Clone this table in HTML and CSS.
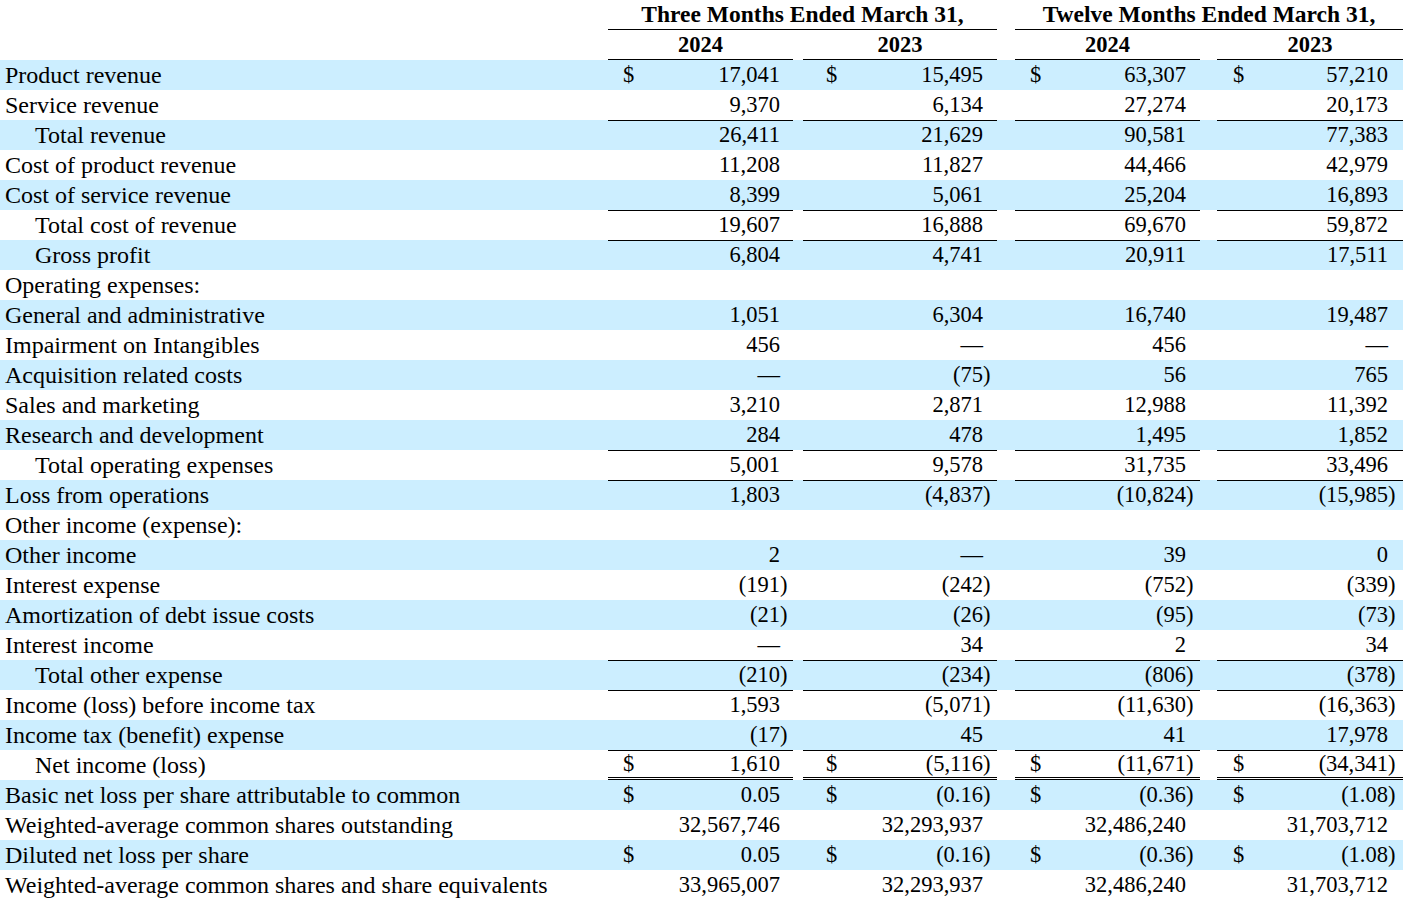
FILE: index.html
```html
<!DOCTYPE html>
<html lang="en">
<head>
<meta charset="utf-8">
<title>Statement of Operations</title>
<link rel="stylesheet" href="styles.css">
</head>
<body>
<div class="sheet">
  <div class="row head">
    <div class="lbl"></div>
    <div class="hd span-a">Three Months Ended March 31,</div>
    <div class="gap"></div>
    <div class="hd span-b">Twelve Months Ended March 31,</div>
  </div>
  <div class="row head">
    <div class="lbl"></div>
    <div class="yr">2024</div><div class="gap"></div>
    <div class="yr">2023</div><div class="gap"></div>
    <div class="yr">2024</div><div class="gap"></div>
    <div class="yr">2023</div>
  </div>

  <div class="row shade">
    <div class="lbl">Product revenue</div>
    <div class="v c1"><span class="d">$</span><span class="n">17,041</span><span class="p"></span></div><div class="gap"></div>
    <div class="v c2"><span class="d">$</span><span class="n">15,495</span><span class="p"></span></div><div class="gap"></div>
    <div class="v c3"><span class="d">$</span><span class="n">63,307</span><span class="p"></span></div><div class="gap"></div>
    <div class="v c4"><span class="d">$</span><span class="n">57,210</span><span class="p"></span></div>
  </div>
  <div class="row">
    <div class="lbl">Service revenue</div>
    <div class="v c1"><span class="d"></span><span class="n">9,370</span><span class="p"></span></div><div class="gap"></div>
    <div class="v c2"><span class="d"></span><span class="n">6,134</span><span class="p"></span></div><div class="gap"></div>
    <div class="v c3"><span class="d"></span><span class="n">27,274</span><span class="p"></span></div><div class="gap"></div>
    <div class="v c4"><span class="d"></span><span class="n">20,173</span><span class="p"></span></div>
  </div>
  <div class="row shade">
    <div class="lbl ind">Total revenue</div>
    <div class="v c1 t"><span class="d"></span><span class="n">26,411</span><span class="p"></span></div><div class="gap"></div>
    <div class="v c2 t"><span class="d"></span><span class="n">21,629</span><span class="p"></span></div><div class="gap"></div>
    <div class="v c3 t"><span class="d"></span><span class="n">90,581</span><span class="p"></span></div><div class="gap"></div>
    <div class="v c4 t"><span class="d"></span><span class="n">77,383</span><span class="p"></span></div>
  </div>
  <div class="row">
    <div class="lbl">Cost of product revenue</div>
    <div class="v c1"><span class="d"></span><span class="n">11,208</span><span class="p"></span></div><div class="gap"></div>
    <div class="v c2"><span class="d"></span><span class="n">11,827</span><span class="p"></span></div><div class="gap"></div>
    <div class="v c3"><span class="d"></span><span class="n">44,466</span><span class="p"></span></div><div class="gap"></div>
    <div class="v c4"><span class="d"></span><span class="n">42,979</span><span class="p"></span></div>
  </div>
  <div class="row shade">
    <div class="lbl">Cost of service revenue</div>
    <div class="v c1"><span class="d"></span><span class="n">8,399</span><span class="p"></span></div><div class="gap"></div>
    <div class="v c2"><span class="d"></span><span class="n">5,061</span><span class="p"></span></div><div class="gap"></div>
    <div class="v c3"><span class="d"></span><span class="n">25,204</span><span class="p"></span></div><div class="gap"></div>
    <div class="v c4"><span class="d"></span><span class="n">16,893</span><span class="p"></span></div>
  </div>
  <div class="row">
    <div class="lbl ind">Total cost of revenue</div>
    <div class="v c1 t"><span class="d"></span><span class="n">19,607</span><span class="p"></span></div><div class="gap"></div>
    <div class="v c2 t"><span class="d"></span><span class="n">16,888</span><span class="p"></span></div><div class="gap"></div>
    <div class="v c3 t"><span class="d"></span><span class="n">69,670</span><span class="p"></span></div><div class="gap"></div>
    <div class="v c4 t"><span class="d"></span><span class="n">59,872</span><span class="p"></span></div>
  </div>
  <div class="row shade">
    <div class="lbl ind">Gross profit</div>
    <div class="v c1 t"><span class="d"></span><span class="n">6,804</span><span class="p"></span></div><div class="gap"></div>
    <div class="v c2 t"><span class="d"></span><span class="n">4,741</span><span class="p"></span></div><div class="gap"></div>
    <div class="v c3 t"><span class="d"></span><span class="n">20,911</span><span class="p"></span></div><div class="gap"></div>
    <div class="v c4 t"><span class="d"></span><span class="n">17,511</span><span class="p"></span></div>
  </div>
  <div class="row">
    <div class="lbl">Operating expenses:</div>
  </div>
  <div class="row shade">
    <div class="lbl">General and administrative</div>
    <div class="v c1"><span class="d"></span><span class="n">1,051</span><span class="p"></span></div><div class="gap"></div>
    <div class="v c2"><span class="d"></span><span class="n">6,304</span><span class="p"></span></div><div class="gap"></div>
    <div class="v c3"><span class="d"></span><span class="n">16,740</span><span class="p"></span></div><div class="gap"></div>
    <div class="v c4"><span class="d"></span><span class="n">19,487</span><span class="p"></span></div>
  </div>
  <div class="row">
    <div class="lbl">Impairment on Intangibles</div>
    <div class="v c1"><span class="d"></span><span class="n">456</span><span class="p"></span></div><div class="gap"></div>
    <div class="v c2"><span class="d"></span><span class="n dash">—</span><span class="p"></span></div><div class="gap"></div>
    <div class="v c3"><span class="d"></span><span class="n">456</span><span class="p"></span></div><div class="gap"></div>
    <div class="v c4"><span class="d"></span><span class="n dash">—</span><span class="p"></span></div>
  </div>
  <div class="row shade">
    <div class="lbl">Acquisition related costs</div>
    <div class="v c1"><span class="d"></span><span class="n dash">—</span><span class="p"></span></div><div class="gap"></div>
    <div class="v c2"><span class="d"></span><span class="n">(75</span><span class="p">)</span></div><div class="gap"></div>
    <div class="v c3"><span class="d"></span><span class="n">56</span><span class="p"></span></div><div class="gap"></div>
    <div class="v c4"><span class="d"></span><span class="n">765</span><span class="p"></span></div>
  </div>
  <div class="row">
    <div class="lbl">Sales and marketing</div>
    <div class="v c1"><span class="d"></span><span class="n">3,210</span><span class="p"></span></div><div class="gap"></div>
    <div class="v c2"><span class="d"></span><span class="n">2,871</span><span class="p"></span></div><div class="gap"></div>
    <div class="v c3"><span class="d"></span><span class="n">12,988</span><span class="p"></span></div><div class="gap"></div>
    <div class="v c4"><span class="d"></span><span class="n">11,392</span><span class="p"></span></div>
  </div>
  <div class="row shade">
    <div class="lbl">Research and development</div>
    <div class="v c1"><span class="d"></span><span class="n">284</span><span class="p"></span></div><div class="gap"></div>
    <div class="v c2"><span class="d"></span><span class="n">478</span><span class="p"></span></div><div class="gap"></div>
    <div class="v c3"><span class="d"></span><span class="n">1,495</span><span class="p"></span></div><div class="gap"></div>
    <div class="v c4"><span class="d"></span><span class="n">1,852</span><span class="p"></span></div>
  </div>
  <div class="row">
    <div class="lbl ind">Total operating expenses</div>
    <div class="v c1 t"><span class="d"></span><span class="n">5,001</span><span class="p"></span></div><div class="gap"></div>
    <div class="v c2 t"><span class="d"></span><span class="n">9,578</span><span class="p"></span></div><div class="gap"></div>
    <div class="v c3 t"><span class="d"></span><span class="n">31,735</span><span class="p"></span></div><div class="gap"></div>
    <div class="v c4 t"><span class="d"></span><span class="n">33,496</span><span class="p"></span></div>
  </div>
  <div class="row shade">
    <div class="lbl">Loss from operations</div>
    <div class="v c1 t"><span class="d"></span><span class="n">1,803</span><span class="p"></span></div><div class="gap"></div>
    <div class="v c2 t"><span class="d"></span><span class="n">(4,837</span><span class="p">)</span></div><div class="gap"></div>
    <div class="v c3 t"><span class="d"></span><span class="n">(10,824</span><span class="p">)</span></div><div class="gap"></div>
    <div class="v c4 t"><span class="d"></span><span class="n">(15,985</span><span class="p">)</span></div>
  </div>
  <div class="row">
    <div class="lbl">Other income (expense):</div>
  </div>
  <div class="row shade">
    <div class="lbl">Other income</div>
    <div class="v c1"><span class="d"></span><span class="n">2</span><span class="p"></span></div><div class="gap"></div>
    <div class="v c2"><span class="d"></span><span class="n dash">—</span><span class="p"></span></div><div class="gap"></div>
    <div class="v c3"><span class="d"></span><span class="n">39</span><span class="p"></span></div><div class="gap"></div>
    <div class="v c4"><span class="d"></span><span class="n">0</span><span class="p"></span></div>
  </div>
  <div class="row">
    <div class="lbl">Interest expense</div>
    <div class="v c1"><span class="d"></span><span class="n">(191</span><span class="p">)</span></div><div class="gap"></div>
    <div class="v c2"><span class="d"></span><span class="n">(242</span><span class="p">)</span></div><div class="gap"></div>
    <div class="v c3"><span class="d"></span><span class="n">(752</span><span class="p">)</span></div><div class="gap"></div>
    <div class="v c4"><span class="d"></span><span class="n">(339</span><span class="p">)</span></div>
  </div>
  <div class="row shade">
    <div class="lbl">Amortization of debt issue costs</div>
    <div class="v c1"><span class="d"></span><span class="n">(21</span><span class="p">)</span></div><div class="gap"></div>
    <div class="v c2"><span class="d"></span><span class="n">(26</span><span class="p">)</span></div><div class="gap"></div>
    <div class="v c3"><span class="d"></span><span class="n">(95</span><span class="p">)</span></div><div class="gap"></div>
    <div class="v c4"><span class="d"></span><span class="n">(73</span><span class="p">)</span></div>
  </div>
  <div class="row">
    <div class="lbl">Interest income</div>
    <div class="v c1"><span class="d"></span><span class="n dash">—</span><span class="p"></span></div><div class="gap"></div>
    <div class="v c2"><span class="d"></span><span class="n">34</span><span class="p"></span></div><div class="gap"></div>
    <div class="v c3"><span class="d"></span><span class="n">2</span><span class="p"></span></div><div class="gap"></div>
    <div class="v c4"><span class="d"></span><span class="n">34</span><span class="p"></span></div>
  </div>
  <div class="row shade">
    <div class="lbl ind">Total other expense</div>
    <div class="v c1 t"><span class="d"></span><span class="n">(210</span><span class="p">)</span></div><div class="gap"></div>
    <div class="v c2 t"><span class="d"></span><span class="n">(234</span><span class="p">)</span></div><div class="gap"></div>
    <div class="v c3 t"><span class="d"></span><span class="n">(806</span><span class="p">)</span></div><div class="gap"></div>
    <div class="v c4 t"><span class="d"></span><span class="n">(378</span><span class="p">)</span></div>
  </div>
  <div class="row">
    <div class="lbl">Income (loss) before income tax</div>
    <div class="v c1 t"><span class="d"></span><span class="n">1,593</span><span class="p"></span></div><div class="gap"></div>
    <div class="v c2 t"><span class="d"></span><span class="n">(5,071</span><span class="p">)</span></div><div class="gap"></div>
    <div class="v c3 t"><span class="d"></span><span class="n">(11,630</span><span class="p">)</span></div><div class="gap"></div>
    <div class="v c4 t"><span class="d"></span><span class="n">(16,363</span><span class="p">)</span></div>
  </div>
  <div class="row shade">
    <div class="lbl">Income tax (benefit) expense</div>
    <div class="v c1"><span class="d"></span><span class="n">(17</span><span class="p">)</span></div><div class="gap"></div>
    <div class="v c2"><span class="d"></span><span class="n">45</span><span class="p"></span></div><div class="gap"></div>
    <div class="v c3"><span class="d"></span><span class="n">41</span><span class="p"></span></div><div class="gap"></div>
    <div class="v c4"><span class="d"></span><span class="n">17,978</span><span class="p"></span></div>
  </div>
  <div class="row">
    <div class="lbl ind">Net income (loss)</div>
    <div class="v c1 t dbl"><span class="d">$</span><span class="n">1,610</span><span class="p"></span></div><div class="gap"></div>
    <div class="v c2 t dbl"><span class="d">$</span><span class="n">(5,116</span><span class="p">)</span></div><div class="gap"></div>
    <div class="v c3 t dbl"><span class="d">$</span><span class="n">(11,671</span><span class="p">)</span></div><div class="gap"></div>
    <div class="v c4 t dbl"><span class="d">$</span><span class="n">(34,341</span><span class="p">)</span></div>
  </div>
  <div class="row shade">
    <div class="lbl">Basic net loss per share attributable to common</div>
    <div class="v c1"><span class="d">$</span><span class="n">0.05</span><span class="p"></span></div><div class="gap"></div>
    <div class="v c2"><span class="d">$</span><span class="n">(0.16</span><span class="p">)</span></div><div class="gap"></div>
    <div class="v c3"><span class="d">$</span><span class="n">(0.36</span><span class="p">)</span></div><div class="gap"></div>
    <div class="v c4"><span class="d">$</span><span class="n">(1.08</span><span class="p">)</span></div>
  </div>
  <div class="row">
    <div class="lbl">Weighted-average common shares outstanding</div>
    <div class="v c1"><span class="d"></span><span class="n">32,567,746</span><span class="p"></span></div><div class="gap"></div>
    <div class="v c2"><span class="d"></span><span class="n">32,293,937</span><span class="p"></span></div><div class="gap"></div>
    <div class="v c3"><span class="d"></span><span class="n">32,486,240</span><span class="p"></span></div><div class="gap"></div>
    <div class="v c4"><span class="d"></span><span class="n">31,703,712</span><span class="p"></span></div>
  </div>
  <div class="row shade">
    <div class="lbl">Diluted net loss per share</div>
    <div class="v c1"><span class="d">$</span><span class="n">0.05</span><span class="p"></span></div><div class="gap"></div>
    <div class="v c2"><span class="d">$</span><span class="n">(0.16</span><span class="p">)</span></div><div class="gap"></div>
    <div class="v c3"><span class="d">$</span><span class="n">(0.36</span><span class="p">)</span></div><div class="gap"></div>
    <div class="v c4"><span class="d">$</span><span class="n">(1.08</span><span class="p">)</span></div>
  </div>
  <div class="row">
    <div class="lbl">Weighted-average common shares and share equivalents</div>
    <div class="v c1"><span class="d"></span><span class="n">33,965,007</span><span class="p"></span></div><div class="gap"></div>
    <div class="v c2"><span class="d"></span><span class="n">32,293,937</span><span class="p"></span></div><div class="gap"></div>
    <div class="v c3"><span class="d"></span><span class="n">32,486,240</span><span class="p"></span></div><div class="gap"></div>
    <div class="v c4"><span class="d"></span><span class="n">31,703,712</span><span class="p"></span></div>
  </div>
</div>
</body>
</html>
```

FILE: styles.css
```css
html, body {
  margin: 0;
  padding: 0;
  background: #ffffff;
}

body {
  font-family: "Liberation Serif", "Times New Roman", serif;
  font-size: 22.5px;
  color: #000000;
}

.sheet {
  width: 1403px;
}

.row {
  display: grid;
  grid-template-columns: 608px 185px 10px 194px 18px 185px 17px 186px;
  height: 30px;
  line-height: 30px;
}

.shade {
  background: #cceeff;
}

.lbl {
  padding-left: 5px;
  white-space: nowrap;
  font-size: 24px;
}

.lbl.ind {
  padding-left: 35px;
}

.head {
  font-weight: bold;
}

.hd {
  text-align: center;
  font-size: 23.5px;
  border-bottom: 1px solid #000;
  box-sizing: border-box;
  height: 30px;
  line-height: 29px;
}

.span-a {
  grid-column: 2 / 5;
}

.span-b {
  grid-column: 6 / 9;
}

.yr {
  text-align: center;
  border-bottom: 1px solid #000;
  box-sizing: border-box;
  height: 30px;
  line-height: 29px;
}

.v {
  display: flex;
  align-items: baseline;
  box-sizing: border-box;
  height: 30px;
  white-space: nowrap;
}

.v .d {
  flex: 1 1 auto;
}

.v .n {
  flex: 0 0 auto;
  text-align: right;
}

.v .p {
  flex: 0 0 9px;
  width: 9px;
  text-align: left;
}

.c1 { padding-left: 15px; padding-right: 4px; }
.c2 { padding-left: 23px; padding-right: 5px; }
.c3 { padding-left: 15px; padding-right: 5px; }
.c4 { padding-left: 16px; padding-right: 6px; }

.t {
  border-top: 1px solid #000;
  line-height: 28px;
}

.dbl {
  border-bottom: 3px double #000;
  line-height: 26px;
}
```
